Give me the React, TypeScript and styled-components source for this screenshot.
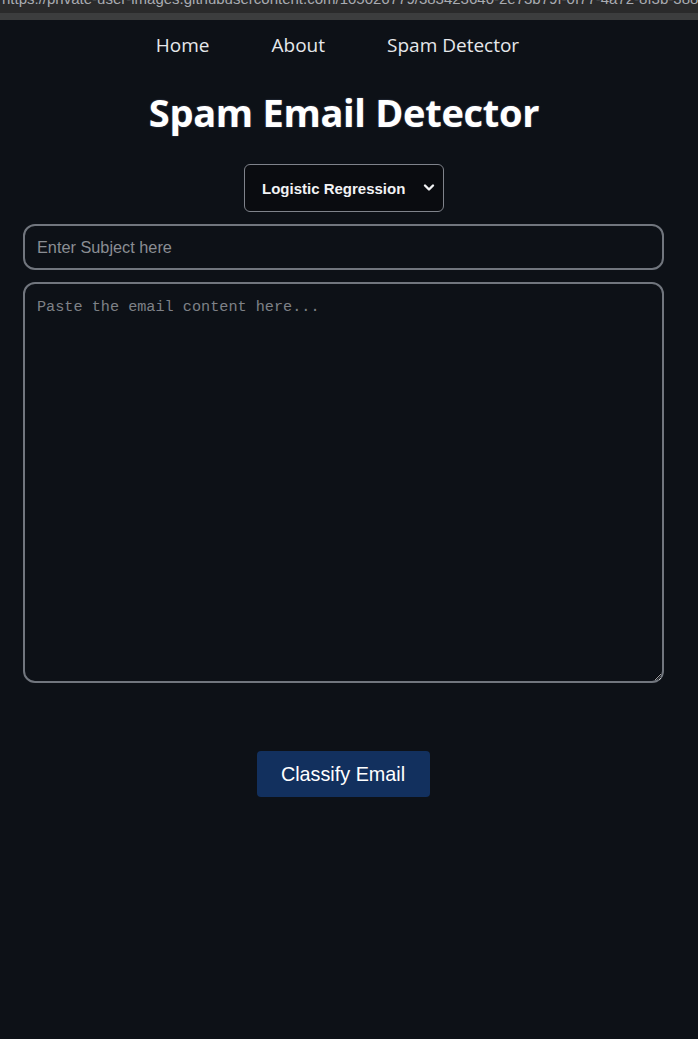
import React, { FC, useState } from "react";
import styled, { createGlobalStyle } from "styled-components";

const GlobalStyle = createGlobalStyle`
    html, body {
        margin: 0;
        padding: 0;
        background: #0d1117;
        color-scheme: dark;
    }
    * {
        box-sizing: border-box;
    }
`;

/* Browser chrome strip */
const UrlStrip = styled.div`
    height: 13px;
    overflow: hidden;
    background: #2a2a2b;
    white-space: nowrap;
`;

const UrlText = styled.div`
    margin-top: -10px;
    padding-left: 2px;
    font-family: "Liberation Sans", Arial, sans-serif;
    font-size: 15px;
    line-height: 18px;
    color: #a9acb2;
`;

const TabBar = styled.div`
    height: 7px;
    background: #3c3d3e;
`;

/* Nav */
const Nav = styled.nav`
    display: flex;
    justify-content: center;
    gap: 62px;
    padding: 13px 23px 0 0;
    height: 50px;
`;

const NavLink = styled.a`
    font-family: "Open Sans", "Noto Sans", sans-serif;
    font-size: 19px;
    line-height: 24px;
    color: #e6e8eb;
    text-decoration: none;
    cursor: pointer;
`;

/* Title */
const Title = styled.h1`
    margin: 18px 10px 0 0;
    text-align: center;
    font-family: "Open Sans", "Noto Sans", sans-serif;
    font-weight: 700;
    font-size: 38px;
    line-height: 48px;
    color: #ffffff;
    letter-spacing: -0.3px;
    text-shadow: 0 0 2px rgba(180, 200, 255, 0.35);
`;

/* Model picker */
const PickerRow = styled.div`
    display: flex;
    justify-content: center;
    margin-top: 28px;
    padding-right: 10px;
`;

const PickerWrap = styled.div`
    position: relative;
    width: 200px;
    height: 48px;
`;

const ModelSelect = styled.select`
    appearance: none;
    width: 100%;
    height: 100%;
    padding: 0 0 0 17px;
    border: 1.5px solid #7f838b;
    border-radius: 6px;
    background: #0a0c10;
    color: #f2f3f5;
    font-family: "Liberation Sans", Arial, sans-serif;
    font-weight: 700;
    font-size: 15px;
    outline: none;
`;

const Chevron = styled.svg`
    position: absolute;
    right: 9px;
    top: 19px;
    width: 12px;
    height: 10px;
    pointer-events: none;
`;

/* Form */
const Form = styled.form`
    display: flex;
    flex-direction: column;
    gap: 12px;
    margin-top: 12px;
    padding-left: 23px;
`;

const SubjectInput = styled.input`
    width: 641px;
    height: 46px;
    padding: 0 12px;
    border: 2px solid #71767e;
    border-radius: 12px;
    background: #0d1117;
    color: #e6e8eb;
    font-family: "Liberation Sans", Arial, sans-serif;
    font-size: 16.3px;
    outline: none;
    &::placeholder {
        color: #8a8d93;
    }
`;

const Body = styled.textarea`
    width: 641px;
    height: 401px;
    padding: 13px 12px;
    border: 2px solid #71767e;
    border-radius: 12px;
    background: #0d1117;
    color: #e6e8eb;
    font-family: "Liberation Mono", "DejaVu Sans Mono", monospace;
    font-size: 15.2px;
    line-height: 20px;
    outline: none;
    &::placeholder {
        color: #7e8187;
    }
`;

const ButtonRow = styled.div`
    display: flex;
    justify-content: center;
    margin-top: 68px;
    padding-right: 12px;
`;

const ClassifyButton = styled.button`
    width: 173px;
    height: 46px;
    border: none;
    border-radius: 4px;
    background: #12305e;
    color: #ffffff;
    font-family: "Liberation Sans", Arial, sans-serif;
    font-size: 19.8px;
    cursor: pointer;
`;

const App: FC = () => {
    const [model, setModel] = useState("logistic");

    return (
        <>
            <GlobalStyle />
            <UrlStrip>
                <UrlText>
                    https://private-user-images.githubusercontent.com/105026779/383423640-2e73b79f-0f77-4a72-8f3b-3886774a2e7f.jpg
                </UrlText>
            </UrlStrip>
            <TabBar />

            <Nav>
                <NavLink>Home</NavLink>
                <NavLink>About</NavLink>
                <NavLink>Spam Detector</NavLink>
            </Nav>

            <Title>Spam Email Detector</Title>

            <PickerRow>
                <PickerWrap>
                    <ModelSelect value={model} onChange={(e) => setModel(e.target.value)}>
                        <option value="logistic">Logistic Regression</option>
                        <option value="bayes">Naive Bayes</option>
                        <option value="svm">SVM</option>
                    </ModelSelect>
                    <Chevron viewBox="0 0 12 10">
                        <path d="M2 2.5 L6 6.5 L10 2.5" fill="none" stroke="#f2f3f5" strokeWidth="2.4" strokeLinecap="round" strokeLinejoin="round" />
                    </Chevron>
                </PickerWrap>
            </PickerRow>

            <Form onSubmit={(e) => e.preventDefault()}>
                <SubjectInput placeholder="Enter Subject here" />
                <Body placeholder="Paste the email content here..." />
            </Form>

            <ButtonRow>
                <ClassifyButton>Classify Email</ClassifyButton>
            </ButtonRow>
        </>
    );
};

export default App;
